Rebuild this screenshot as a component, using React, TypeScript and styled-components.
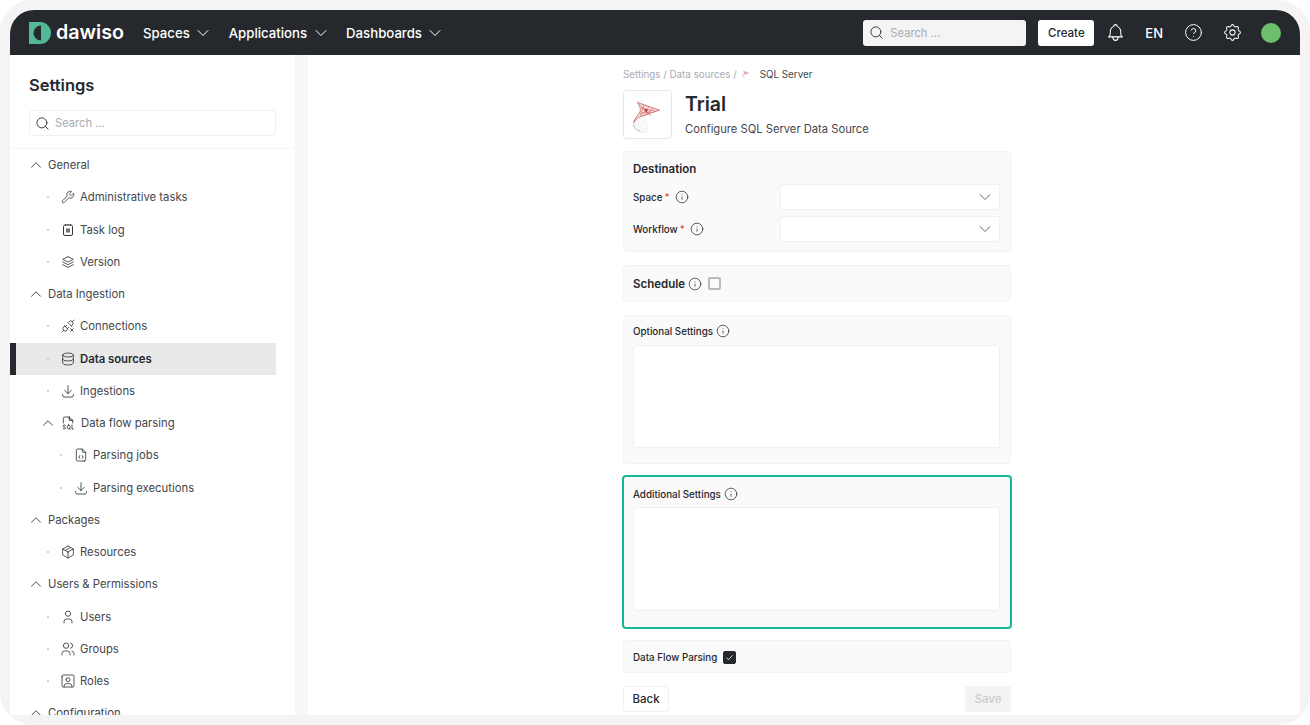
import React from "react";
import styled, { createGlobalStyle } from "styled-components";
import { ChevronDown, ChevronUp, CircleHelp, Info, Search, Wrench } from "lucide-react";
import {
  TbBell,
  TbDatabase,
  TbDownload,
  TbFileCode,
  TbFileTypeSql,
  TbPackage,
  TbPlugConnectedX,
  TbSettings,
  TbStack2,
  TbUser,
  TbUsers,
  TbUserSquare,
} from "react-icons/tb";

const GlobalStyle = createGlobalStyle`
  html, body {
    margin: 0;
    padding: 0;
    background: #ffffff;
    font-family: "Inter", "Liberation Sans", sans-serif;
    color: #25282d;
  }
  * {
    box-sizing: border-box;
  }
  svg {
    flex: none;
  }
`;

const Frame = styled.div`
  width: 1310px;
  height: 725px;
  padding: 10px;
  background: #f4f4f4;
  border-radius: 32px;
  overflow: hidden;
`;

const Window = styled.div`
  height: 705px;
  display: flex;
  flex-direction: column;
  background: #ffffff;
  border-radius: 24px 24px 0 0;
  overflow: hidden;
`;

const Header = styled.header`
  height: 45px;
  flex: none;
  display: flex;
  align-items: center;
  padding: 0 19px;
  background: #25282d;
  color: #ffffff;
`;

const LogoLink = styled.div`
  display: flex;
  align-items: center;
  gap: 5px;
  width: 114px;
`;

const LogoText = styled.span`
  font-family: "Inter", sans-serif;
  font-size: 19.7px;
  font-weight: 600;
  line-height: 1;
`;

const TopNav = styled.nav`
  display: flex;
  gap: 20px;
`;

const TopNavItem = styled.div`
  display: flex;
  align-items: center;
  gap: 8px;
  font-size: 13.2px;
  font-weight: 500;
`;

const TopChevron = styled(ChevronDown)`
  margin: 0 -4.5px;
`;

const HeaderRight = styled.div`
  margin-left: auto;
  display: flex;
  align-items: center;
  gap: 21px;
  font-size: 13px;
  font-weight: 500;
`;

const HeaderActions = styled.div`
  display: flex;
  align-items: center;
  gap: 12px;
  margin-right: -9px;
`;

const HeaderSearch = styled.div`
  width: 163px;
  height: 26px;
  display: flex;
  align-items: center;
  gap: 6px;
  padding: 0 6px;
  background: #f4f4f4;
  border-radius: 3px;
  color: #25282d;
`;

const Placeholder = styled.span`
  font-size: 11.2px;
  font-weight: 400;
  color: #a9abae;
`;

const CreateButton = styled.button`
  width: 56px;
  height: 26px;
  border: 0;
  border-radius: 3px;
  background: #ffffff;
  color: #25282d;
  font: 500 11.5px "Inter", sans-serif;
`;

const HeaderIcon = styled.span`
  width: 18px;
  height: 18px;
  display: flex;
  align-items: center;
  justify-content: center;
`;

const Avatar = styled.div`
  width: 20px;
  height: 20px;
  border-radius: 50%;
  background: #6dbf6c;
  margin-left: -1px;
`;

const Body = styled.div`
  flex: 1;
  min-height: 0;
  display: flex;
`;

const Sidebar = styled.aside`
  width: 285px;
  flex: none;
  overflow: hidden;
`;

const SidebarTop = styled.div`
  padding: 21px 19px 12px;
  border-bottom: 1px solid #f5f5f5;
`;

const SidebarTitle = styled.h2`
  margin: 0 0 14px;
  font-size: 16.5px;
  line-height: 19px;
  font-weight: 600;
`;

const SidebarSearch = styled.div`
  height: 26px;
  margin-top: 15px;
  display: flex;
  align-items: center;
  gap: 5px;
  padding: 0 5px;
  border: 1px solid #f0f0f0;
  border-radius: 3px;
`;

const NavList = styled.div`
  margin-right: 19px;
`;

const NavRow = styled.div<{ $indent: number; $active?: boolean; $gap: number }>`
  height: 32.25px;
  display: flex;
  align-items: center;
  gap: ${(p) => p.$gap}px;
  padding-left: ${(p) => p.$indent}px;
  font-size: 11.3px;
  color: ${(p) => (p.$active ? "#25282d" : "#43464b")};
  font-weight: ${(p) => (p.$active ? 600 : 400)};
  background: ${(p) => (p.$active ? "#e8e9e8" : "transparent")};
  box-shadow: ${(p) => (p.$active ? "inset 6px 0 0 #25282d" : "none")};
`;

const NavChevron = styled(ChevronUp)`
  margin: 0 -3px;
  color: #25282d;
`;

const NavIcon = styled.span`
  width: 14px;
  height: 14px;
  flex: none;
  display: flex;
  align-items: center;
  justify-content: center;
  color: #33363b;
`;

const Dot = styled.span`
  width: 2px;
  height: 2px;
  margin-right: 7px;
  background: #d2d3d4;
`;

const Gutter = styled.div`
  width: 13px;
  flex: none;
  background: #f7f7f7;
`;

const Main = styled.main`
  flex: 1;
  min-width: 0;
  overflow: hidden;
  padding: 12px 0 0 315px;
`;

const Column = styled.div`
  width: 388px;
  display: flex;
  flex-direction: column;
  gap: 13px;
`;

const Breadcrumb = styled.div`
  height: 14px;
  display: flex;
  align-items: center;
  gap: 3px;
  font-size: 9.8px;
  color: #a9abae;
`;

const BreadcrumbCurrent = styled.span`
  margin-left: 5px;
  color: #43464b;
`;

const PageHead = styled.div`
  display: flex;
  gap: 13px;
  margin-top: -4px;
`;

const LogoBox = styled.div`
  width: 49px;
  height: 49px;
  border: 1px solid #e9e9e9;
  border-radius: 3px;
`;

const PageTitle = styled.h1`
  margin: 0;
  font-size: 19.5px;
  line-height: 28px;
  font-weight: 600;
`;

const PageSubtitle = styled.p`
  margin: 3px 0 0;
  font-size: 11.2px;
  line-height: 16px;
  color: #43464b;
`;

const Card = styled.section<{ $highlight?: boolean }>`
  padding: ${(p) => (p.$highlight ? "10px 10px 16px 9px" : "8px 10px 15px 9px")};
  margin: ${(p) => (p.$highlight ? "-2px -1px" : "0")};
  background: #fafafa;
  border: ${(p) => (p.$highlight ? "2px solid #12b795" : "1px solid #f3f3f3")};
  border-radius: 4px;
`;

const DestinationCard = styled(Card)`
  margin-top: -1px;
  padding-top: 9px;
  padding-bottom: 9px;
  display: flex;
  flex-direction: column;
  gap: 6px;
`;

const CardTitle = styled.div`
  display: flex;
  align-items: center;
  gap: 3px;
  font-size: 11.5px;
  line-height: 16px;
  font-weight: 600;
`;

const DestinationTitle = styled(CardTitle)`
  margin-bottom: 1px;
`;

const FieldRow = styled.div`
  display: grid;
  grid-template-columns: 147px 1fr;
  align-items: center;
`;

const FieldLabel = styled.div`
  display: flex;
  align-items: center;
  gap: 5px;
  font-size: 9.8px;
  font-weight: 500;
`;

const Required = styled.span`
  color: #e2492d;
  margin-left: -3px;
`;

const SelectBox = styled.div`
  height: 26px;
  display: flex;
  align-items: center;
  justify-content: flex-end;
  padding-right: 4px;
  background: #ffffff;
  border: 1px solid #f0f0f0;
  border-radius: 3px;
  color: #55585c;
`;

const InlineCard = styled(Card)`
  display: flex;
  align-items: center;
  gap: 6px;
  height: 37px;
  padding-top: 0;
  padding-bottom: 0;
`;

const SmallCard = styled(InlineCard)`
  height: 33px;
  font-size: 9.8px;
  font-weight: 500;
  padding-top: 1px;
`;

const Checkbox = styled.span<{ $checked?: boolean }>`
  width: 13px;
  height: 13px;
  display: flex;
  align-items: center;
  justify-content: center;
  border-radius: 2px;
  border: ${(p) => (p.$checked ? "1px solid #25282d" : "2px solid #b9babb")};
  background: ${(p) => (p.$checked ? "#25282d" : "#fafafa")};
`;

const AreaLabel = styled(FieldLabel)`
  height: 14px;
  gap: 3px;
  margin-bottom: 7px;
`;

const HighlightLabel = styled(AreaLabel)`
  margin-bottom: 6px;
`;

const TextArea = styled.div<{ $height: number }>`
  height: ${(p) => p.$height}px;
  background: #ffffff;
  border: 1px solid #f0f0f0;
  border-radius: 3px;
`;

const Actions = styled.div`
  display: flex;
  justify-content: space-between;
`;

const ActionButton = styled.button<{ $disabled?: boolean }>`
  width: 46px;
  height: 26px;
  padding: 0;
  font: 500 11.5px "Inter", sans-serif;
  border-radius: 3px;
  border: 1px solid ${(p) => (p.$disabled ? "#f3f3f3" : "#f0f0f0")};
  background: ${(p) => (p.$disabled ? "#f3f3f3" : "#ffffff")};
  color: ${(p) => (p.$disabled ? "#c9cacb" : "#25282d")};
`;

const DawisoMark = () => (
  <svg width="22" height="22" viewBox="0 0 22 22">
    <path d="M0 0h11a11 11 0 0 1 0 22H0z" fill="#52b896" />
    <path d="M12 3.500a7.500 7.500 0 0 0 0 15z" fill="#25282d" />
  </svg>
);

const TaskLogIcon = () => (
  <svg width="14" height="14" viewBox="0 0 14 14" fill="none" stroke="currentColor" strokeWidth="1">
    <rect x="2.5" y="2" width="9" height="10.5" rx="1.5" />
    <path d="M4.5 1v1.5M7 1v1.5M9.5 1v1.5" />
    <rect x="5" y="5.5" width="4" height="4" fill="currentColor" stroke="none" opacity="0.7" />
  </svg>
);

const SqlServerLogo: React.FC<{ size: number }> = ({ size }) => (
  <svg width={size} height={size} viewBox="0 0 49 49" fill="none">
    <path d="M15 28C10 32 9 38 13 41c4 3 10 3 12 0 1-5-3-11-5-15z" fill="#f8f9fb" stroke="#e2e5ea" strokeWidth="0.6" />
    <path d="M10 35c0 3 3 6 7 7" stroke="#9fb0c8" strokeWidth="0.8" />
    <path d="M14 12c2-2 6-2 7 2" stroke="#e2e2e2" strokeWidth="0.8" />
    <path d="M14 12l23 8-21 7c-2 1-4 3-6 6 1-4 4-7 6-10 2-3 1-7-2-11z" fill="#f7e6e4" stroke="#c4504c" strokeWidth="0.8" />
    <path d="M16 14l12 12M21 15l-4 10M26 17l-8 8M31 18l-9 7M18 18l15 3M18 23l10-1" stroke="#cf5f5b" strokeWidth="0.7" />
    <circle cx="23" cy="20" r="1.600" fill="#bb3b37" />
  </svg>
);

const navIcon = { size: 16, strokeWidth: 1.25 };

const groups: {
  label: string;
  items: { label: string; icon: React.ReactNode; active?: boolean; nested?: { label: string; icon: React.ReactNode }[] }[];
}[] = [
  {
    label: "General",
    items: [
      { label: "Administrative tasks", icon: <Wrench size={14} strokeWidth={1.4} /> },
      { label: "Task log", icon: <TaskLogIcon /> },
      { label: "Version", icon: <TbStack2 {...navIcon} /> },
    ],
  },
  {
    label: "Data Ingestion",
    items: [
      { label: "Connections", icon: <TbPlugConnectedX {...navIcon} /> },
      { label: "Data sources", icon: <TbDatabase {...navIcon} />, active: true },
      { label: "Ingestions", icon: <TbDownload {...navIcon} /> },
      {
        label: "Data flow parsing",
        icon: <TbFileTypeSql {...navIcon} />,
        nested: [
          { label: "Parsing jobs", icon: <TbFileCode {...navIcon} /> },
          { label: "Parsing executions", icon: <TbDownload {...navIcon} /> },
        ],
      },
    ],
  },
  { label: "Packages", items: [{ label: "Resources", icon: <TbPackage {...navIcon} /> }] },
  {
    label: "Users & Permissions",
    items: [
      { label: "Users", icon: <TbUser {...navIcon} /> },
      { label: "Groups", icon: <TbUsers {...navIcon} /> },
      { label: "Roles", icon: <TbUserSquare {...navIcon} /> },
    ],
  },
  { label: "Configuration", items: [] },
];

const SettingsNav = () => (
  <NavList>
    {groups.map((group) => (
      <React.Fragment key={group.label}>
        <NavRow $indent={20} $gap={6}>
          <NavChevron size={18} strokeWidth={1.1} />
          {group.label}
        </NavRow>
        {group.items.map((item) =>
          item.nested ? (
            <React.Fragment key={item.label}>
              <NavRow $indent={32} $gap={6.5}>
                <NavChevron size={18} strokeWidth={1.1} />
                <NavIcon>{item.icon}</NavIcon>
                {item.label}
              </NavRow>
              {item.nested.map((child) => (
                <NavRow key={child.label} $indent={50} $gap={5}>
                  <Dot />
                  <NavIcon>{child.icon}</NavIcon>
                  {child.label}
                </NavRow>
              ))}
            </React.Fragment>
          ) : (
            <NavRow key={item.label} $indent={37} $gap={5} $active={item.active}>
              <Dot />
              <NavIcon>{item.icon}</NavIcon>
              {item.label}
            </NavRow>
          ),
        )}
      </React.Fragment>
    ))}
  </NavList>
);

const InfoIcon = () => <Info size={14} strokeWidth={1.25} />;

export default function App() {
  return (
    <>
      <GlobalStyle />
      <Frame>
        <Window>
          <Header>
            <LogoLink>
              <DawisoMark />
              <LogoText>dawiso</LogoText>
            </LogoLink>
            <TopNav>
              {["Spaces", "Applications", "Dashboards"].map((label) => (
                <TopNavItem key={label}>
                  {label}
                  <TopChevron size={20} strokeWidth={1.2} />
                </TopNavItem>
              ))}
            </TopNav>
            <HeaderRight>
              <HeaderActions>
                <HeaderSearch>
                  <Search size={15} strokeWidth={1.4} />
                  <Placeholder>Search ...</Placeholder>
                </HeaderSearch>
                <CreateButton>Create</CreateButton>
              </HeaderActions>
              <HeaderIcon>
                <TbBell size={21} strokeWidth={1.15} />
              </HeaderIcon>
              <span>EN</span>
              <HeaderIcon>
                <CircleHelp size={19} strokeWidth={1.25} />
              </HeaderIcon>
              <HeaderIcon>
                <TbSettings size={21} strokeWidth={1.15} />
              </HeaderIcon>
              <Avatar />
            </HeaderRight>
          </Header>
          <Body>
            <Sidebar>
              <SidebarTop>
                <SidebarTitle>Settings</SidebarTitle>
                <SidebarSearch>
                  <Search size={15} strokeWidth={1.4} />
                  <Placeholder>Search ...</Placeholder>
                </SidebarSearch>
              </SidebarTop>
              <SettingsNav />
            </Sidebar>
            <Gutter />
            <Main>
              <Column>
                <Breadcrumb>
                  Settings / Data sources /
                  <SqlServerLogo size={12} />
                  <BreadcrumbCurrent>SQL Server</BreadcrumbCurrent>
                </Breadcrumb>
                <PageHead>
                  <LogoBox>
                    <SqlServerLogo size={47} />
                  </LogoBox>
                  <div>
                    <PageTitle>Trial</PageTitle>
                    <PageSubtitle>Configure SQL Server Data Source</PageSubtitle>
                  </div>
                </PageHead>
                <DestinationCard>
                  <DestinationTitle>Destination</DestinationTitle>
                  <FieldRow>
                    <FieldLabel>
                      Space <Required>*</Required> <InfoIcon />
                    </FieldLabel>
                    <SelectBox>
                      <ChevronDown size={20} strokeWidth={1.1} />
                    </SelectBox>
                  </FieldRow>
                  <FieldRow>
                    <FieldLabel>
                      Workflow <Required>*</Required> <InfoIcon />
                    </FieldLabel>
                    <SelectBox>
                      <ChevronDown size={20} strokeWidth={1.1} />
                    </SelectBox>
                  </FieldRow>
                </DestinationCard>
                <InlineCard>
                  <CardTitle>
                    Schedule <InfoIcon />
                  </CardTitle>
                  <Checkbox />
                </InlineCard>
                <Card>
                  <AreaLabel>
                    Optional Settings <InfoIcon />
                  </AreaLabel>
                  <TextArea $height={103} />
                </Card>
                <Card $highlight>
                  <HighlightLabel>
                    Additional Settings <InfoIcon />
                  </HighlightLabel>
                  <TextArea $height={104} />
                </Card>
                <SmallCard>
                  Data Flow Parsing
                  <Checkbox $checked>
                    <svg width="9" height="9" viewBox="0 0 9 9" fill="none" stroke="#ffffff" strokeWidth="0.8">
                      <path d="M1.500 4.700l2 2 4-4.400" />
                    </svg>
                  </Checkbox>
                </SmallCard>
                <Actions>
                  <ActionButton>Back</ActionButton>
                  <ActionButton $disabled>Save</ActionButton>
                </Actions>
              </Column>
            </Main>
          </Body>
        </Window>
      </Frame>
    </>
  );
}
